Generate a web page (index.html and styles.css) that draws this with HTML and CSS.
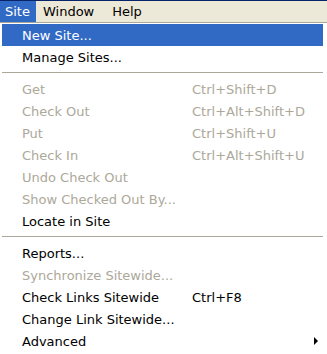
FILE: index.html
```html
<!DOCTYPE html>
<html lang="en">
<head>
    <meta charset="UTF-8">
    <title>Site menu</title>
    <link rel="stylesheet" href="styles.css">
</head>
<body>
    <div class="menubar">
        <span class="top active">Site</span>
        <span class="top">Window</span>
        <span class="top">Help</span>
    </div>
    <div class="menu">
        <div class="item hover"><span class="label">New Site...</span></div>
        <div class="item"><span class="label">Manage Sites...</span></div>
        <div class="sep"></div>
        <div class="item off"><span class="label">Get</span><span class="key">Ctrl+Shift+D</span></div>
        <div class="item off"><span class="label">Check Out</span><span class="key">Ctrl+Alt+Shift+D</span></div>
        <div class="item off"><span class="label">Put</span><span class="key">Ctrl+Shift+U</span></div>
        <div class="item off"><span class="label">Check In</span><span class="key">Ctrl+Alt+Shift+U</span></div>
        <div class="item off"><span class="label">Undo Check Out</span></div>
        <div class="item off"><span class="label">Show Checked Out By...</span></div>
        <div class="item"><span class="label">Locate in Site</span></div>
        <div class="sep"></div>
        <div class="item"><span class="label">Reports...</span></div>
        <div class="item off"><span class="label">Synchronize Sitewide...</span></div>
        <div class="item"><span class="label">Check Links Sitewide</span><span class="key">Ctrl+F8</span></div>
        <div class="item"><span class="label">Change Link Sitewide...</span></div>
        <div class="item"><span class="label">Advanced</span><span class="arrow"></span></div>
    </div>
</body>
</html>
```

FILE: styles.css
```css
body {
    margin: 0;
    font-family: Tahoma, "DejaVu Sans", sans-serif;
    font-size: 13px;
    background: #ffffff;
    width: 327px;
    height: 354px;
    overflow: hidden;
}
.menubar {
    height: 21px;
    display: flex;
    background: #ece9d8;
    border-top: 1px solid #0a246a;
    border-bottom: 1px solid #aca899;
}
.top {
    padding: 0 6px 0 5px;
    line-height: 21px;
    color: #000;
    margin-right: 7px;
}
.top.active {
    background: #316ac5;
    color: #fff;
    margin-right: 2px;
}
.menu {
    padding: 1px 3px 0 2px;
    border-right: 1px solid #ffffff;
}
.item {
    display: flex;
    align-items: center;
    height: 22px;
    padding-left: 20px;
    color: #000;
    white-space: nowrap;
    position: relative;
}
.item.hover {
    background: #316ac5;
    color: #fff;
}
.item.off {
    color: #aca899;
}
.label {
    width: 170px;
}
.key {
    flex: 1;
}
.sep {
    height: 1px;
    background: #aca899;
    margin: 4px 0 5px 0;
}
.arrow {
    position: absolute;
    right: 5px;
    top: 7px;
    width: 0;
    height: 0;
    border-top: 4px solid transparent;
    border-bottom: 4px solid transparent;
    border-left: 4px solid #000;
}
```
